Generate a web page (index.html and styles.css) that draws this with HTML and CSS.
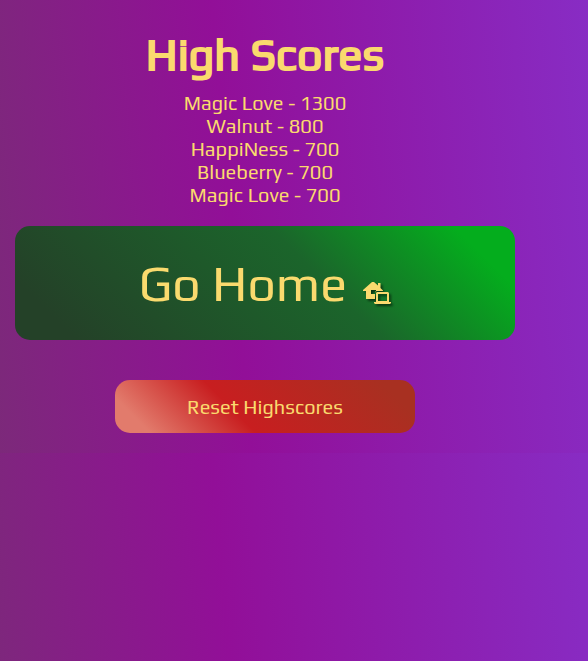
FILE: index.html
```html
<!DOCTYPE html>
<html lang="en">
<head>
<meta charset="utf-8">
<title>High Scores</title>
<link rel="stylesheet" href="styles.css">
</head>
<body>
<main class="scores">
  <h1 class="title">High Scores</h1>
  <ul class="score-list">
    <li>Magic Love - 1300</li>
    <li>Walnut - 800</li>
    <li>HappiNess - 700</li>
    <li>Blueberry - 700</li>
    <li>Magic Love - 700</li>
  </ul>
  <a class="button home" href="#home">Go Home
    <svg class="icon" viewBox="0 0 28 24" aria-hidden="true">
      <path fill="currentColor" fill-rule="evenodd" d="M9 1h2l4 3.5V2h2.5v5L20 9.5V10h-6.5L12 11.5V18H3v-8H0V9zM8 9v4h4v-2l1-1V9z"/>
      <path fill="currentColor" fill-rule="evenodd" d="M13 12l1-1h11l1 1v9h2v1l-1 1H12l-1-1v-1h2zM15 13v7h9v-7z"/>
    </svg>
  </a>
  <button class="button reset" type="button">Reset Highscores</button>
</main>
</body>
</html>
```

FILE: styles.css
```css
* {
  box-sizing: border-box;
}

body {
  margin: 0;
  font-family: Play, "Open Sans", "Noto Sans", sans-serif;
  font-size: 20px;
  line-height: 23px;
  color: #fada6e;
  background: linear-gradient(85deg, #7c297a, #920f98 40%, #882cc4);
}

.scores {
  display: flex;
  flex-direction: column;
  align-items: center;
  max-width: 530px;
  padding: 30px 15px 20px;
}

.title {
  margin: 0 0 13px;
  font-size: 45px;
  font-weight: 400;
  line-height: 48px;
  -webkit-text-stroke: 2px currentColor;
}

.score-list {
  margin: 0 0 20px;
  padding: 0;
  list-style: none;
  text-align: center;
}

.button {
  display: flex;
  align-items: center;
  justify-content: center;
  border: 0;
  border-radius: 15px;
  color: inherit;
  font: inherit;
  text-decoration: none;
}

.home {
  gap: 16px;
  width: 100%;
  margin-bottom: 40px;
  padding: 28px 20px;
  font-size: 50px;
  line-height: 58px;
  background: linear-gradient(45deg, #244128 10%, #1b652b 60%, #04ad1d 90%);
}

.icon {
  width: 28px;
  height: 24px;
  margin-top: 20px;
  filter: drop-shadow(2px 2px 1px #0008);
}

.reset {
  width: 60%;
  padding: 15px 20px;
  background: linear-gradient(45deg, #e27b6c 10%, #c81e20 40%, #a83021 90%);
}
```
